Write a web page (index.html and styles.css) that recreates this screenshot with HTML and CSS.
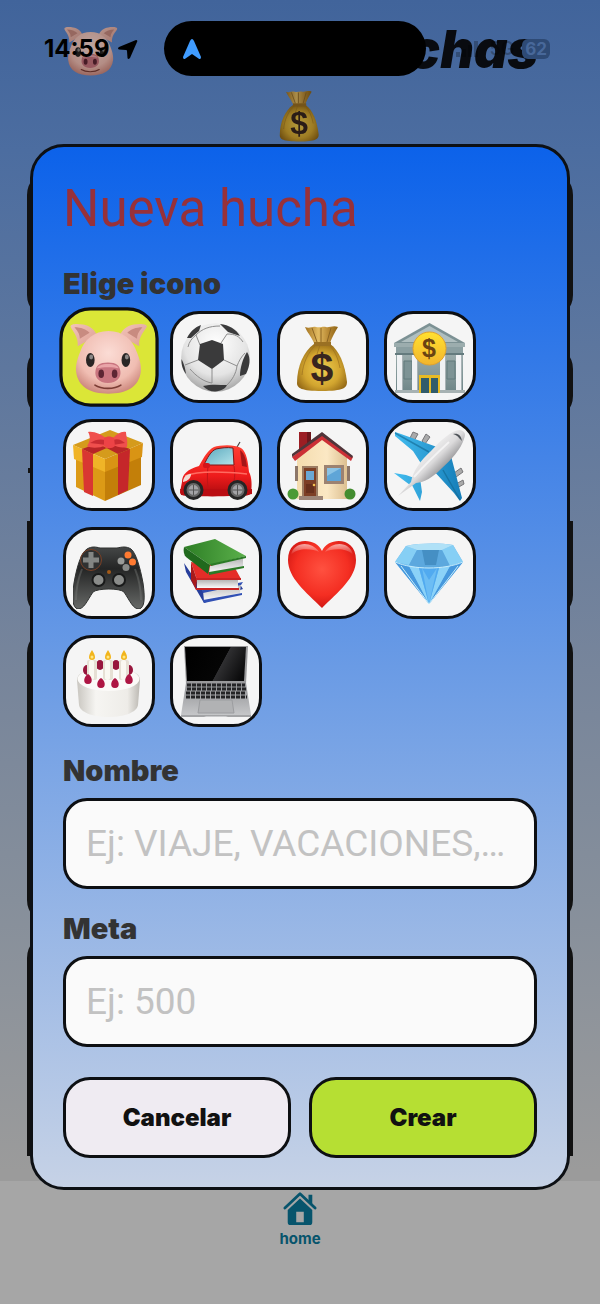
FILE: index.html
```html
<!DOCTYPE html>
<html lang="es">
<head>
<meta charset="utf-8">
<meta name="viewport" content="width=device-width, initial-scale=1">
<title>Mis huchas</title>
<link rel="stylesheet" href="styles.css">
</head>
<body>
<svg class="defs" aria-hidden="true">
  <defs>
    <radialGradient id="skin" cx=".5" cy=".35" r=".65"><stop offset="0" stop-color="#fbdcd5"/><stop offset=".7" stop-color="#f0bdb2"/><stop offset="1" stop-color="#cf8b80"/></radialGradient>
    <linearGradient id="ear" x1="0" y1="0" x2="1" y2="1"><stop offset="0" stop-color="#f3c4b9"/><stop offset="1" stop-color="#dc9f94"/></linearGradient>
    <radialGradient id="ballg" cx=".5" cy=".3" r=".7"><stop offset="0" stop-color="#fff"/><stop offset=".65" stop-color="#e4e4e4"/><stop offset="1" stop-color="#a6a6a6"/></radialGradient>
    <radialGradient id="gold" cx=".5" cy=".55" r=".6"><stop offset="0" stop-color="#f0cf50"/><stop offset=".6" stop-color="#d2a52f"/><stop offset="1" stop-color="#8f6414"/></radialGradient>
    <linearGradient id="neck"><stop offset="0" stop-color="#a2721f"/><stop offset=".4" stop-color="#e2bb62"/><stop offset=".7" stop-color="#b98a35"/><stop offset="1" stop-color="#8f6414"/></linearGradient>
    <linearGradient id="coin" x1="0" y1="0" x2="0" y2="1"><stop offset="0" stop-color="#ffe12f"/><stop offset="1" stop-color="#f3b52d"/></linearGradient>
    <linearGradient id="stone" x1="0" y1="0" x2="0" y2="1"><stop offset="0" stop-color="#9aabab"/><stop offset="1" stop-color="#71888a"/></linearGradient>
    <linearGradient id="car" x1="0" y1="0" x2="0" y2="1"><stop offset="0" stop-color="#ff4033"/><stop offset=".6" stop-color="#ee1c1c"/><stop offset="1" stop-color="#a90a0e"/></linearGradient>
    <linearGradient id="glass" x1="0" y1="0" x2="1" y2="1"><stop offset="0" stop-color="#5aa9be"/><stop offset="1" stop-color="#b4e3ea"/></linearGradient>
    <linearGradient id="wall"><stop offset="0" stop-color="#f4dcae"/><stop offset=".6" stop-color="#fbe8c4"/><stop offset="1" stop-color="#dcbf90"/></linearGradient>
    <linearGradient id="fuse" x1=".3" y1=".3" x2=".7" y2=".7"><stop offset="0" stop-color="#f8f8f8"/><stop offset=".5" stop-color="#dcdbdc"/><stop offset="1" stop-color="#77777a"/></linearGradient>
    <linearGradient id="wing"><stop offset="0" stop-color="#43bdf0"/><stop offset="1" stop-color="#157db8"/></linearGradient>
    <linearGradient id="pad" x1="0" y1="0" x2="0" y2="1"><stop offset="0" stop-color="#454747"/><stop offset=".35" stop-color="#242525"/><stop offset="1" stop-color="#676967"/></linearGradient>
    <linearGradient id="green"><stop offset="0" stop-color="#2d7e25"/><stop offset="1" stop-color="#5bb04b"/></linearGradient>
    <linearGradient id="pages" x1="0" y1="0" x2="0" y2="1"><stop offset="0" stop-color="#b5b5b5"/><stop offset="1" stop-color="#fbfbfb"/></linearGradient>
    <radialGradient id="heartg" cx=".5" cy=".42" r=".6"><stop offset="0" stop-color="#ff5140"/><stop offset=".65" stop-color="#f42e22"/><stop offset="1" stop-color="#ce1512"/></radialGradient>
    <linearGradient id="shine" x1="0" y1="0" x2="0" y2="1"><stop offset="0" stop-color="#fff" stop-opacity=".6"/><stop offset="1" stop-color="#fff" stop-opacity="0"/></linearGradient>
    <linearGradient id="cakeg"><stop offset="0" stop-color="#c9c6c0"/><stop offset=".3" stop-color="#f6f5f2"/><stop offset=".8" stop-color="#eeece8"/><stop offset="1" stop-color="#bbb8b2"/></linearGradient>
    <linearGradient id="screeng" x1="0" y1=".3" x2="1" y2=".6"><stop offset="0" stop-color="#000"/><stop offset=".6" stop-color="#050505"/><stop offset=".61" stop-color="#2f2f31"/><stop offset="1" stop-color="#0b0b0c"/></linearGradient>
    <linearGradient id="metal" x1="0" y1="0" x2="0" y2="1"><stop offset="0" stop-color="#8f9093"/><stop offset="1" stop-color="#c9cacc"/></linearGradient>

    <symbol id="pig" viewBox="0 0 72 72">
      <path d="M7 26C8 17 2 12 .5 8 0 5 7 5 12 6c6 1 10 4 13 10z" fill="url(#ear)"/>
      <path d="M9 19C9 14 6 11 4 8.500c6 0 11 2 14 5z" fill="#c88b80"/>
      <path d="M64 26c-1-9 5-14 7-18 .5-3-7-3-12-2-6 1-10 4-13 10z" fill="url(#ear)"/>
      <path d="M62 19c0-5 3-8 5-10.500-6 0-11 2-14 5z" fill="#c88b80"/>
      <path d="M35.500 12C49 12 58 20 62 32c2 5 4 11 3.500 17C64 64 52 70 35.500 70S7 64 5.500 49C5 43 7 37 9 32c4-12 13-20 26.500-20z" fill="url(#skin)"/>
      <ellipse cx="18.700" cy="38.800" rx="4" ry="6.500" fill="#292524"/><ellipse cx="51.600" cy="38.800" rx="4" ry="6.500" fill="#292524"/>
      <ellipse cx="19.500" cy="36" rx="1.800" ry="2.300" fill="#8b8786"/><ellipse cx="52.500" cy="36" rx="1.800" ry="2.300" fill="#8b8786"/>
      <path d="M35 41c8 0 11 3 11.500 8 1 6-3 11-11.500 11s-12.500-5-11.500-11c.5-5 3.500-8 11.500-8z" fill="#c9757f"/>
      <path d="M35 42.500c6 0 9 1.500 10 4-5-1.500-15-1.500-20 0 1-2.500 4-4 10-4z" fill="#e9a4a8"/>
      <ellipse cx="28.800" cy="51.500" rx="2.600" ry="4" fill="#5d2533"/><ellipse cx="41.200" cy="51.500" rx="2.600" ry="4" fill="#5d2533"/>
      <path d="M23 62c6 4 18 4 24 0" fill="none" stroke="#7b3c34" stroke-width="1.500" stroke-linecap="round"/>
    </symbol>

    <symbol id="ball" viewBox="0 0 72 72">
      <circle cx="35.500" cy="36.500" r="34.300" fill="url(#ballg)"/>
      <g fill="none" stroke="#8d8d8d" stroke-width="1">
        <path d="M20 24 16 14M41 22l6-9M44 39l13 6M32 48v14M18 39 5 44M16 14c6-6 13-9 24-9M47 13c8 0 12 2 16 8M57 45c2-5 4-9 8-13M57 45c-1 8-5 14-10 19M32 62c-8-1-16-7-22-14M8 26c1-5 4-9 8-12"/>
      </g>
      <g fill="#3a3a3b">
        <path d="m20 23 12-4 11 4 1 16-12 9-14-9z"/>
        <path d="M7 17c3-6 8-11 14-13l-2 6-8 7zM40 3c9 1 16 5 20 12l-12-4zM67 31c4 6 3 14-1 22l-6 2c0-8 3-18 7-24zM23 65c8-2 16-1 24-1-2 4-6 6-12 6.500-5 0-9-2-12-5.500zM1.500 38C3 41 5 45 6 53 3 49 1 44 1.500 38z"/>
      </g>
    </symbol>

    <symbol id="bag" viewBox="0 0 72 72">
      <path d="M27 22C24 15 20 11 18 6c5 2 7-1 11 0s7-1 10 0 7-2 12 0c-3 5-6 10-8 16z" fill="url(#neck)"/>
      <path d="M25 7l5 14M34 7v14M44 7l-4 14" stroke="#8a6321" stroke-width="1" fill="none"/>
      <path d="M27 23h16c9 6 15 20 17 38 0 6-4 9-25 9s-25-3-25-8c0-17 7-32 17-39z" fill="url(#gold)"/>
      <path d="M29 24C21 31 16 42 15 54M42 24c6 6 9 13 11 23M33 24l-3 9" stroke="#9b7120" stroke-width="1" fill="none" opacity=".7"/>
      <path d="M27 21h17v4H27z" fill="#9a7023"/>
      <text class="money-sign" x="35" y="61" text-anchor="middle" font-size="41" fill="#38251f">$</text>
    </symbol>

    <symbol id="bank" viewBox="0 0 72 72">
      <path d="M2 34h67v35H2z" fill="url(#stone)"/>
      <path d="M0 22 35.500 2 71 22v4H0z" fill="#7c9194"/><path d="M7 21 35.500 5 64 21z" fill="#b0bfc0"/>
      <path d="M0 22h71v4H0z" fill="#9cadae"/><path d="M2 26h67v7H2z" fill="#8b9fa1"/><path d="M1 32h69v2H1z" fill="#647b7e"/>
      <path d="M10 40h8v18h-8zM53 40h8v18h-8z" fill="#7d9395" stroke="#627a7d"/>
      <path d="M3 34h6v36H3zM18 34h6v36h-6zM46 34h6v36h-6zM62 34h6v36h-6z" fill="#f0f2f4"/>
      <path d="M8 34h1v36H8zM23 34h1v36h-1zM51 34h1v36h-1zM67 34h1v36h-1z" fill="#a8b2b5"/>
      <path d="M1 69h70v3H1z" fill="#a7b2b3"/>
      <path d="M25 54h21v18H25z" fill="#e8bb24"/><path d="M27 57h8v15h-8zM37 57h7v15h-7z" fill="#315c6b"/>
      <circle cx="35.500" cy="27.500" r="16.500" fill="url(#coin)" stroke="#e1a22c"/>
      <text class="money-sign" x="35" y="36" text-anchor="middle" font-size="25" fill="#6a4312">$</text>
    </symbol>

    <symbol id="gift" viewBox="0 0 72 72">
      <path d="M3 28 32 41v31L3 58z" fill="#dc9a16"/><path d="m32 41 36-14v29L32 72z" fill="#c37f09"/>
      <path d="M0 16 37 1l33 13-38 16z" fill="#d59b1c"/>
      <path d="m0 16 32 14v13L1 30z" fill="#f0b427"/><path d="m32 30 38-16-1 14-37 15z" fill="#d99414"/>
      <path d="m9 20 11 5v42l-9-4z" fill="#d93632"/><path d="m45 25 12-5-2 41-10 5z" fill="#c5272a"/>
      <path d="m9 20 25-9 9 4-23 10zM57 20 34 12l-8 3 19 10z" fill="#b82527"/>
      <path d="M34 10C28 5 21 2 15 3c3 5 2 10-1 14 4 2 10 3 20-1zM39 10c5-5 9-8 14-7 0 4 2 8 1 15-4 1-9 1-15-3z" fill="#f04f4d"/>
      <path d="M33 11c-6-1-10-1-16 3l17 2zM40 11c5-2 8 0 12 3l-12 2z" fill="#c92c32"/>
      <path d="M31 9c3-2 7-2 10 0l1 8c-3 3-9 3-11 0z" fill="#ed4346"/>
    </symbol>

    <symbol id="carro" viewBox="0 0 72 72">
      <path d="m57 18 3-5" stroke="#444" stroke-width="1.200"/>
      <path d="M2 53c0-8 6-13 17-16 5-9 9-16 15-19 6-2 20-3 27 1 6 4 7 15 8 24 3 5 3 14 2 21-1 3-8 3-13 3H10c-6 0-10-1-10-4z" fill="url(#car)"/>
      <path d="M24 36c3-7 7-14 12-16 5-1 11-2 17-1l1 17z" fill="url(#glass)" stroke="#7e1515" stroke-width="1"/>
      <path d="M60 21c5 4 6 10 7 17l-5-1z" fill="#a51518"/>
      <path d="M28 37c-1 9-1 19 1 28M54 37c1 7 1 10 0 15" fill="none" stroke="#c01517"/>
      <path d="M5 47c12-5 33-5 62-2" fill="none" stroke="#ff6a60" stroke-width="1.500"/>
      <path d="M3 52c1-5 4-7 8-7 0 4-3 7-8 8z" fill="#f3dad2"/><rect x="23" y="34" width="7" height="5" rx="2" fill="#d31419"/>
      <path d="M0 60h72v5c-15 3-56 3-71 1z" fill="#ba0d12"/>
      <g fill="#252525"><circle cx="13.500" cy="61" r="10"/><circle cx="57.500" cy="61" r="10"/></g>
      <g fill="#a3a3a6" stroke="#686868" stroke-width="2"><circle cx="13.500" cy="61" r="6"/><circle cx="57.500" cy="61" r="6"/></g>
      <path d="M13.500 56v10m-5-5h10M57.500 56v10m-5-5h10" stroke="#555"/>
    </symbol>

    <symbol id="house" viewBox="0 0 72 72">
      <path d="M12 3h12v18l-12 5z" fill="#9c1e24"/><path d="M20 3h4v14l-4 3z" fill="#6e161b"/>
      <path d="M10 27 35 7l25 20v43H10z" fill="url(#wall)"/>
      <path d="M5 28 35 5l31 23-2 4L35 11 8 32z" fill="#cc3036"/><path d="m5 25 30-22 31 24-1 2L35 7 5 28z" fill="#50353a"/>
      <path d="M8 37h3v15H8zM60 37h3v15h-3z" fill="#8c7668"/>
      <path d="M15 37h16v31H15z" fill="#9c7d63"/><path d="M17 39h12v28H17z" fill="#7d3f25"/><path d="M19 42h8v9h-8z" fill="#6ba8d4"/><path d="M19 55h8v9h-8z" fill="#67301c"/><circle cx="27" cy="56" r="1.300" fill="#f4c151"/>
      <path d="M37 36h20v19H37z" fill="#9c8271"/><path d="M40 39h14v13H40z" fill="#5fa5d7"/><path d="M40 39h14l-14 8z" fill="#8bc3e5"/>
      <path d="M12 67h24v4H12z" fill="#9c8577"/>
      <circle cx="6" cy="65" r="5.500" fill="#4a9a35"/><circle cx="63" cy="65" r="5.500" fill="#438d30"/>
    </symbol>

    <symbol id="plane" viewBox="0 0 72 72">
      <g fill="#aaa" stroke="#77777a"><path d="m16 9 3-6 5 2-4 7zM28 12l4-7 4 3-5 7zM60 44l7-5 2 4-7 5zM62 55l7-4 1 4-7 4z"/></g>
      <path d="M1 3 7 5l36 13-15 18L19 22 1 7zM57 27l11 42-2 3-6-8-22-24zM0 44l12 2 11 4-7 6zM26 49l2 14-2 9-5-10-3-6z" fill="url(#wing)"/>
      <path d="m1 4 34 19M66 71 49 41" stroke="#116791" stroke-width="1.500" opacity=".6"/>
      <path d="M4 67 17 53c2-11 9-21 20-31C47 11 58 1 66 1c5 1 6 4 4 9-3 10-13 21-23 30-9 9-16 13-25 14z" fill="url(#fuse)"/>
      <path d="M59 5c5-1 8 1 9 7l-3-3c-1-2-3-3-6-4z" fill="#4e5358"/>
      <path d="M20 48c8-9 22-23 35-35" fill="none" stroke="#fff" stroke-width="2" opacity=".6"/>
    </symbol>

    <symbol id="gamepad" viewBox="0 0 72 72">
      <path d="M14 12c5-3 9-2 13-1h17c5-1 9-2 14 1 5 4 9 18 12 34 2 14 2 25-4 26-6 0-9-8-15-17-4-4-26-4-31 0C14 64 11 72 5 72-1 71-1 60 1 46 4 29 8 16 14 12z" fill="url(#pad)" stroke="#303231"/>
      <path d="M9 32c-4 10-6 20-6 31M62 32c4 10 6 20 6 31" fill="none" stroke="#7b7c7a" stroke-width="2" opacity=".4"/>
      <circle cx="18" cy="23" r="10.500" fill="#303131" stroke="#7a4026"/><path d="M15.500 15h5v5.500H26v5h-5.500V31h-5v-5.500H10v-5h5.500z" fill="#838583"/>
      <circle cx="55" cy="18" r="3.500" fill="#ff7a31"/><circle cx="59.500" cy="25" r="3.500" fill="#ff7a31"/><circle cx="48" cy="24" r="3.500" fill="#999b99"/><circle cx="53" cy="30.500" r="3.500" fill="#898b89"/>
      <g fill="#8a8c8a" stroke="#191a1a" stroke-width="2"><circle cx="25.500" cy="43" r="6"/><circle cx="46" cy="43" r="6"/></g>
      <circle cx="36" cy="35" r="2" fill="#a35a18"/>
    </symbol>

    <symbol id="books" viewBox="0 0 72 72">
      <path d="m4 26 19 28 38-5 2 3-39 14L6 35z" fill="#273e9b"/><path d="m23 54 38-8-1 10-36 8z" fill="url(#pages)"/><path d="m22 53 41-8-2 3-38 8zM23 63l39-7v2L24 66z" fill="#3150b4"/>
      <path d="m11 25 44 6 6 11-44 1z" fill="#e52d28"/><path d="m11 25 6 18-1 10-5-10z" fill="#a81a1c"/><path d="M17 43h41v8H17z" fill="url(#pages)"/><path d="M16 41h45v2H16zM16 51h43v2H16z" fill="#c92424"/>
      <path d="M4 10 35 2l31 17-36 9z" fill="url(#green)"/><path d="m4 10 26 18-2 9L6 20C4 18 3 14 4 10z" fill="#20691d"/><path d="m30 29 33-8v9l-34 6z" fill="url(#pages)"/><path d="m30 27 36-8v2l-35 8zM29 35l35-6v2l-35 7z" fill="#2b7b26"/>
    </symbol>

    <symbol id="heart" viewBox="0 0 72 72">
      <path d="M35 14C41 0 69-1 69 23c0 18-18 32-34 48C19 55 1 41 1 23 1-1 29 0 35 14z" fill="url(#heartg)"/>
      <path d="M4 18C7 4 25 4 32 15c-6-3-21-5-28 3zM38 15C45 4 63 4 66 18c-7-8-22-6-28-3z" fill="url(#shine)"/>
    </symbol>

    <symbol id="gem" viewBox="0 0 72 72">
      <path d="M1 25 12 9c14-3 33-3 47-1l10 17-34 42z" fill="#68b8ef"/>
      <path d="M1 25 12 9l11 4-8 15zM59 8l10 17-13 4-8-16z" fill="#86cff5"/><path d="m23 13 25 0 8 16c-12 3-29 3-41-1z" fill="#5ca8de"/><path d="m28 13 17 0-3 15-11 0z" fill="#458fc4"/>
      <path d="M12 9c14-3 33-3 47-1l-11 5H23z" fill="#b0e1f7"/>
      <path d="m1 25 14 4 20 38zM35 67l21-38 13-4z" fill="#4698dd"/><path d="m15 29 10 2 10 36zM35 67l10-36 11-2z" fill="#8bd2f8"/><path d="M25 31h20L35 67z" fill="#51aaf0"/>
      <path d="m28 31 7 12 8-12-8 36z" fill="#78c4f5" opacity=".7"/>
      <path d="M1 25c19 8 49 8 68 0M7 29l28 38 29-38" fill="none" stroke="#c8edfb" stroke-width="1"/>
    </symbol>

    <symbol id="cake" viewBox="0 0 72 72">
      <path d="M4 35c0-8 14-13 31.500-13S67 27 67 35l-2 25c-1 7-13 12-29.500 12S7 67 6 60z" fill="url(#cakeg)"/>
      <ellipse cx="35.500" cy="34" rx="31" ry="12" fill="#fbfaf8"/>
      <g fill="#98163d"><ellipse cx="14" cy="25" rx="4" ry="5"/><ellipse cx="27" cy="20" rx="4" ry="5"/><ellipse cx="43" cy="20" rx="4" ry="5"/><ellipse cx="56" cy="25" rx="4" ry="5"/></g>
      <g fill="#e6e0d4"><rect x="14" y="15" width="10" height="20" rx="2"/><rect x="30" y="15" width="10" height="20" rx="2"/><rect x="46" y="15" width="10" height="20" rx="2"/></g>
      <g fill="#faf8f1"><rect x="16" y="15" width="5" height="20" rx="2"/><rect x="32" y="15" width="5" height="20" rx="2"/><rect x="48" y="15" width="5" height="20" rx="2"/></g>
      <g fill="#f2b51c"><path d="M19 5c4 6 4 10 0 10s-4-4 0-10zM35 5c4 6 4 10 0 10s-4-4 0-10zM51 5c4 6 4 10 0 10s-4-4 0-10z"/></g>
      <g fill="#ffe783"><circle cx="19" cy="12" r="1.500"/><circle cx="35" cy="12" r="1.500"/><circle cx="51" cy="12" r="1.500"/></g>
      <g fill="#ae1644"><path d="M15 29c4 2 6 10 0 10-6 0-4-8 0-10zM28 33c4 2 6 10 0 10-6 0-4-8 0-10zM42 33c4 2 6 10 0 10-6 0-4-8 0-10zM56 29c4 2 6 10 0 10-6 0-4-8 0-10z"/></g>
    </symbol>

    <symbol id="laptop" viewBox="0 0 72 72">
      <path d="M4 1h64l-2 38H6z" fill="#99999b"/><path d="M5 2h61l-2 34H7z" fill="url(#screeng)"/>
      <path d="M6 38h60l5 32-1 2H2l-1-2z" fill="url(#metal)"/>
      <path d="M7 40h58M7 44h59M6 48h60M6 52h61" stroke="#242426" stroke-width="3" stroke-dasharray="4 1"/>
      <path d="M20 55h32l2 13H18z" fill="#b1b2b4" stroke="#9c9da0"/><path d="M1 70h70v2H48l-2-1H26l-2 1H1z" fill="#a3a4a6"/>
    </symbol>
  </defs>
</svg>

<div class="screen">
  <header class="app-header">
    <div class="app-title">
      <svg class="title-pig" aria-hidden="true"><use href="#pig"/></svg>
      <h1>Mis huchas</h1>
    </div>
    <svg class="title-bag" aria-hidden="true"><use href="#bag"/></svg>
  </header>
  <main class="cards" aria-hidden="true">
    <div class="card card-summary"></div>
    <div class="card card-action"></div>
    <div class="divider"></div>
    <div class="card card-first"></div>
    <div class="card card-full"></div>
    <div class="card card-last"></div>
  </main>
  <nav class="tabbar">
    <a class="tab" href="#home">
      <svg viewBox="0 0 36 36" aria-hidden="true">
        <path d="M2 18 18 3l16 15" fill="none" stroke="currentColor" stroke-width="3" stroke-linecap="round" stroke-linejoin="round"/>
        <path d="M27 4h4v11l-4-4z" fill="currentColor"/>
        <path d="M18 8 31 20v13q0 3-3 3H8q-3 0-3-3V20zM14 22v11h8V22z" fill="currentColor" fill-rule="evenodd"/>
      </svg>
      <span>home</span>
    </a>
  </nav>

  <div class="statusbar">
    <div class="clock">
      <span>14:59</span>
      <svg viewBox="0 0 20 20" aria-hidden="true"><path d="M18 1q2 0 1 2l-7 16q-2 2-2.500 0l-.5-7q0-1-1-1l-7-.5q-2-1 0-2.500z" fill="#000"/></svg>
    </div>
    <div class="island">
      <svg viewBox="0 0 20 22" aria-hidden="true"><path d="M10 1q1 0 2 2l7 16q0 3-2.500 1.500L10 16l-6.500 4.500Q1 22 1 19L8 3q1-2 2-2z" fill="#409cff"/></svg>
    </div>
    <div class="signals">
      <svg viewBox="0 0 26 18" aria-hidden="true"><path d="M1 12h4v5H1zM7 9h4v8H7zM13 5h4v12h-4zM19 1h4v16h-4z" fill="currentColor"/></svg>
      <span class="network">5G</span>
      <span class="battery">62</span>
    </div>
  </div>

  <div class="overlay">
    <form class="modal" role="dialog" aria-modal="true" aria-labelledby="modal-title">
      <h2 id="modal-title">Nueva hucha</h2>
      <div class="group" role="group" aria-labelledby="icon-label">
        <span class="label" id="icon-label">Elige icono</span>
        <div class="icons">
          <button type="button" class="tile selected" aria-pressed="true" aria-label="Cerdito"><svg><use href="#pig"/></svg></button>
          <button type="button" class="tile" aria-label="Balón"><svg><use href="#ball"/></svg></button>
          <button type="button" class="tile" aria-label="Dinero"><svg><use href="#bag"/></svg></button>
          <button type="button" class="tile" aria-label="Banco"><svg><use href="#bank"/></svg></button>
          <button type="button" class="tile" aria-label="Regalo"><svg><use href="#gift"/></svg></button>
          <button type="button" class="tile" aria-label="Coche"><svg><use href="#carro"/></svg></button>
          <button type="button" class="tile" aria-label="Casa"><svg><use href="#house"/></svg></button>
          <button type="button" class="tile" aria-label="Avión"><svg><use href="#plane"/></svg></button>
          <button type="button" class="tile" aria-label="Mando"><svg><use href="#gamepad"/></svg></button>
          <button type="button" class="tile" aria-label="Libros"><svg><use href="#books"/></svg></button>
          <button type="button" class="tile" aria-label="Corazón"><svg><use href="#heart"/></svg></button>
          <button type="button" class="tile" aria-label="Diamante"><svg><use href="#gem"/></svg></button>
          <button type="button" class="tile" aria-label="Tarta"><svg><use href="#cake"/></svg></button>
          <button type="button" class="tile" aria-label="Portátil"><svg><use href="#laptop"/></svg></button>
        </div>
      </div>
      <div class="group field">
        <label class="label" for="nombre">Nombre</label>
        <input id="nombre" type="text" placeholder="Ej: VIAJE, VACACIONES,…">
      </div>
      <div class="group field">
        <label class="label" for="meta">Meta</label>
        <input id="meta" type="text" inputmode="decimal" placeholder="Ej: 500">
      </div>
      <div class="actions">
        <button type="button" class="btn">Cancelar</button>
        <button type="submit" class="btn primary">Crear</button>
      </div>
    </form>
  </div>
</div>
</body>
</html>
```
FILE: styles.css
```css
* {
  box-sizing: border-box;
}

body {
  margin: 0;
  font-family: Inter, "Liberation Sans", sans-serif;
  color: #111;
}

h1,
h2 {
  margin: 0;
}

button,
input {
  font: inherit;
  color: inherit;
}

.defs {
  position: absolute;
  width: 0;
  height: 0;
}

.money-sign {
  font-family: "Liberation Sans", sans-serif;
  font-weight: 700;
}

/* Dimmed app behind the dialog */
.screen {
  position: relative;
  display: flex;
  flex-direction: column;
  min-height: 100vh;
  background: linear-gradient(#41649b, #4c6da0 150px, #77859b 670px, #868f9b 900px, #9b9b9b 1170px);
}

.app-header {
  display: flex;
  flex-direction: column;
  align-items: center;
  padding-top: 20px;
}

.app-title {
  display: flex;
  align-items: center;
  justify-content: space-between;
  align-self: stretch;
  height: 60px;
  padding: 0 62px 0 64px;
}

.app-title h1 {
  font-size: 52px;
  font-weight: 900;
  font-style: italic;
  line-height: 60px;
  color: #090b10;
}

.title-pig,
.title-bag {
  filter: brightness(.75);
}

.title-pig {
  width: 54px;
  height: 54px;
}

.title-bag {
  width: 56px;
  height: 56px;
  margin-top: 7px;
}

.cards {
  display: flex;
  flex: 1;
  flex-direction: column;
  gap: 10px;
  padding: 28px 27px 25px;
}

.card {
  border: 3px solid #121212;
  border-radius: 24px;
  background: #a6a6a6;
}

.card-summary {
  height: 148px;
}

.card-action {
  height: 75px;
  margin-top: 16px;
}

.divider {
  width: 60px;
  height: 5px;
  margin: 38px 1px;
  background: #121212;
}

.card-first {
  height: 98px;
  border-radius: 0 0 24px 24px;
}

.card-full {
  height: 295px;
}

.card-last {
  flex: 1;
  min-height: 220px;
  border-radius: 24px 24px 0 0;
}

.tabbar {
  display: flex;
  justify-content: center;
  height: 123px;
  padding-top: 10px;
  background: #a6a6a6;
}

.tab {
  display: flex;
  flex-direction: column;
  align-items: center;
  gap: 4px;
  font-size: 15px;
  font-weight: 700;
  line-height: 20px;
  color: #07546c;
  text-decoration: none;
}

.tab svg {
  width: 36px;
  height: 34px;
}

/* System status bar */
.statusbar {
  position: absolute;
  inset: 21px 0 auto;
  display: grid;
  grid-template-columns: 1fr 262px 1fr;
  align-items: center;
  padding: 0 50px 0 40px;
}

.clock {
  display: flex;
  align-items: center;
  gap: 8px;
  padding-left: 4px;
  font-size: 24px;
  font-weight: 700;
  color: #000;
}

.clock svg {
  width: 20px;
  height: 20px;
}

.island {
  display: flex;
  align-items: center;
  height: 55px;
  padding-left: 18px;
  border-radius: 28px;
  background: #000;
}

.island svg {
  width: 20px;
  height: 22px;
}

.signals {
  display: flex;
  align-items: center;
  justify-content: flex-end;
  gap: 8px;
  color: rgba(0, 0, 0, .25);
}

.signals svg {
  width: 26px;
  height: 18px;
}

.network {
  font-size: 18px;
  font-weight: 600;
}

.battery {
  padding: 0 3px;
  border-radius: 6px;
  background: #2e4a75;
  font-size: 17px;
  font-weight: 700;
  line-height: 20px;
  color: #48689a;
}

/* Dialog */
.overlay {
  position: absolute;
  inset: 0;
  padding: 144px 30px 0;
}

.modal {
  display: flex;
  flex-direction: column;
  padding: 30px 30px 29px;
  border: 3px solid #0d1014;
  border-radius: 34px;
  background: linear-gradient(#0c62ea, #6a9be5 50%, #c6d2e6);
}

.modal h2 {
  margin-bottom: 27px;
  font-family: Roboto, Inter, sans-serif;
  font-size: 51px;
  font-weight: 400;
  line-height: 63px;
  color: #97313a;
}

.group {
  display: flex;
  flex-direction: column;
  gap: 10px;
  margin-bottom: 27px;
}

.field {
  margin-bottom: 23px;
}

.label {
  font-size: 29px;
  font-weight: 900;
  line-height: 34px;
  color: #333;
}

.icons {
  display: grid;
  grid-template-columns: repeat(auto-fill, 92px);
  gap: 16px 15px;
}

.tile {
  display: grid;
  place-items: center;
  height: 92px;
  padding: 0;
  border: 3px solid #0d0f12;
  border-radius: 29px;
  background: #f5f5f5;
}

.tile svg {
  width: 72px;
  height: 72px;
}

.tile.selected {
  background: #dbe637;
  transform: scale(1.08);
}

.field input {
  width: 100%;
  height: 91px;
  padding: 0 20px;
  border: 3px solid #0d0f12;
  border-radius: 24px;
  background: #fafafa;
  font-family: Roboto, Inter, sans-serif;
  font-size: 37px;
  text-overflow: ellipsis;
}

.field input::placeholder {
  color: #c2c2c2;
  opacity: 1;
}

.actions {
  display: grid;
  grid-template-columns: 1fr 1fr;
  gap: 18px;
  margin-top: 7px;
}

.btn {
  height: 81px;
  border: 3px solid #0d0f12;
  border-radius: 27px;
  background: #efebf2;
  font-size: 24px;
  font-weight: 900;
}

.btn.primary {
  background: #b6df33;
}
```
